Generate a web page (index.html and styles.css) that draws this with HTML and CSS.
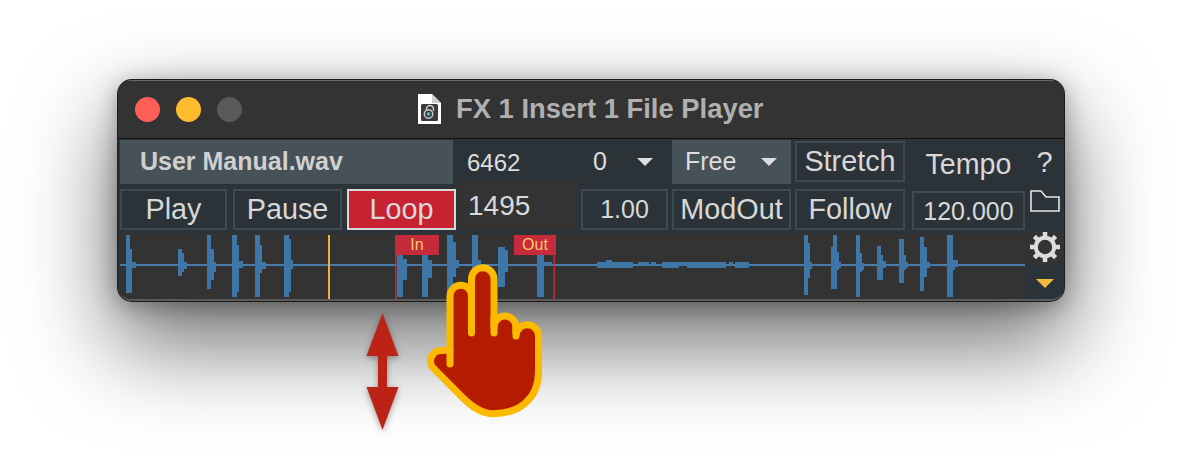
FILE: index.html
```html
<!DOCTYPE html>
<html lang="en">
<head>
    <meta charset="UTF-8">
    <title>FX 1 Insert 1 File Player</title>
    <link rel="stylesheet" href="styles.css">
</head>
<body>
    <div class="window">
        <div class="titlebar">
            <span class="light red"></span>
            <span class="light yellow"></span>
            <span class="light grey"></span>
            <div class="title">
                <svg class="doc-icon" viewBox="0 0 23 30">
                    <path d="M0 0H14L23 9V30H0Z" fill="#fff"/>
                    <path d="M14 0V9H23Z" fill="#ccc"/>
                    <rect x="3" y="10" width="17" height="17" rx="1.5" fill="#3a3a3a"/>
                    <circle cx="10.5" cy="20" r="4.2" fill="none" stroke="#ccc" stroke-width="1.4"/>
                    <path d="M8.5 16.5V15a3.5 3.5 0 0 1 7 0v2" fill="none" stroke="#ccc" stroke-width="1.4"/>
                    <circle cx="10.5" cy="20" r="1.8" fill="#45c4c8"/>
                </svg>
                <span>FX 1 Insert 1 File Player</span>
            </div>
        </div>
        <div class="panel">
            <div class="controls">
                <div class="row row-top">
                    <div class="filename">User Manual.wav</div>
                    <div class="start">6462</div>
                    <div class="select slice"><span>0</span><i class="caret"></i></div>
                    <div class="select mode"><span>Free</span><i class="caret"></i></div>
                    <div class="btn stretch">Stretch</div>
                    <div class="tempo-label">Tempo</div>
                </div>
                <div class="row row-bottom">
                    <div class="btn play">Play</div>
                    <div class="btn pause">Pause</div>
                    <div class="btn loop">Loop</div>
                    <div class="length">1495</div>
                    <div class="btn num rate">1.00</div>
                    <div class="btn modout">ModOut</div>
                    <div class="btn follow">Follow</div>
                    <div class="btn num tempo">120.000</div>
                </div>
                <div class="wave">
                    <svg viewBox="120 234 905 65" width="905" height="65">
                        <rect x="120" y="264" width="905" height="2" fill="#4a7cab"/>
                        <path fill="#3f76a8" d="
                            M126 235h4v58h-4z M130 249h2v23h-2z M132 262h4v6h-4z M130 272h2v21h-2z
                            M178 249h4v27h-4z M182 253h2v19h-2z M184 262h3v7h-3z
                            M207 235h4v54h-4z M211 249h3v31h-3z M214 262h2v10h-2z
                            M232 235h5v62h-5z M237 245h2v47h-2z M239 261h4v7h-4z
                            M255 235h5v62h-5z M260 245h2v28h-2z M262 262h4v7h-4z
                            M284 235h5v62h-5z M289 239h2v53h-2z M291 260h2v9h-2z
                            M397 255h6v42h-6z M403 259h4v21h-4z
                            M422 255h6v42h-6z M428 260h4v18h-4z
                            M447 235h6v62h-6z M453 242h3v35h-3z M456 260h3v8h-3z
                            M472 235h6v62h-6z M478 260h3v8h-3z
                            M498 247h7v40h-7z M505 250h3v22h-3z
                            M537 255h7v42h-7z M544 262h8v4h-8z
                            M597 262h36v6h-36z M606 260h6v2h-6z M638 262h11v3h-11z M651 262h5v3h-5z
                            M662 262h17v6h-17z M679 262h8v4h-8z M687 262h39v6h-39z M729 262h4v3h-4z M735 262h14v6h-14z
                            M804 235h4v60h-4z M808 243h2v35h-2z M810 262h2v7h-2z
                            M833 235h4v54h-4z M831 247h2v42h-2z M837 252h2v18h-2z M839 262h2v6h-2z
                            M856 235h4v62h-4z M860 253h2v19h-2z M862 263h2v7h-2z
                            M877 246h4v34h-4z M881 255h2v25h-2z M883 261h3v7h-3z
                            M899 239h5v44h-5z M904 255h2v15h-2z M906 262h2v6h-2z
                            M920 237h4v54h-4z M924 247h3v30h-3z M927 262h3v6h-3z
                            M947 235h6v62h-6z M953 260h2v10h-2z M955 260h3v7h-3z"/>
                        <rect x="328" y="235" width="2" height="64" fill="#efb23e"/>
                        <rect x="395" y="235" width="1.5" height="64" fill="#c62b3b"/>
                        <rect x="553.5" y="235" width="1.5" height="64" fill="#c62b3b"/>
                    </svg>
                    <span class="marker marker-in">In</span>
                    <span class="marker marker-out">Out</span>
                </div>
            </div>
            <div class="side">
                <div class="help">?</div>
                <svg class="folder" viewBox="0 0 30 22">
                    <path d="M1 21V1H11L16 7H29V21Z" fill="none" stroke="#e4e4e4" stroke-width="1.6"/>
                </svg>
                <div class="gear-cell">
                    <svg class="gear" viewBox="0 0 30 30">
                        <circle cx="15" cy="15" r="9.2" fill="none" stroke="#ddd" stroke-width="4"/>
                        <path stroke="#ddd" stroke-width="4.5" d="M15 0V6M15 24V30M0 15H6M24 15H30M4.4 4.4L8.6 8.6M21.4 21.4L25.6 25.6M4.4 25.6L8.6 21.4M21.4 8.6L25.6 4.4"/>
                    </svg>
                </div>
                <div class="more"><i class="more-caret"></i></div>
            </div>
        </div>
    </div>

    <svg class="arrow" viewBox="0 0 33 117">
        <path d="M16.5 0L32.5 43H21V74H32.5L16.5 117L.5 74H12V43H.5Z" fill="#bd2217"/>
    </svg>

    <svg class="hand" viewBox="425 262 120 158">
        <path d="M450 350V296A10.75 10.75 0 0 1 471.5 296V279A11.25 11.25 0 0 1 494 279V327A11 11 0 0 1 516 327V336A11.25 11.25 0 0 1 538.5 336V372C538.5 398 520 413.7 493 413.7C480 413.7 470 405 462 397L433.6 368.4A10.5 10.5 0 0 1 441 350.5Z" fill="#b51b00" stroke="#fbb900" stroke-width="7" stroke-linejoin="round"/>
        <path d="M471.5 296V333M494 318V333M516 327V333M450 350V364" fill="none" stroke="#fbb900" stroke-width="7" stroke-linecap="round"/>
    </svg>
</body>
</html>
```

FILE: styles.css
```css
html, body {
    margin: 0;
    height: 457px;
    overflow: hidden;
}
body {
    position: relative;
    padding: 80px 0 0 118px;
    box-sizing: border-box;
    background-color: #fff;
    font-family: "Liberation Sans", Arial, sans-serif;
    color: #d6d6d6;
}
.window {
    width: 946px;
    height: 221px;
    box-sizing: border-box;
    background: #333;
    border-radius: 14px;
    overflow: hidden;
    border-bottom: 2px solid #5a5a5a;
    box-shadow: 0 0 0 1px #1c1c1c, 0 4px 24px rgba(0,0,0,0.35), 0 40px 90px 5px rgba(0,0,0,0.55);
}

/* title bar */
.titlebar {
    display: flex;
    align-items: center;
    height: 58px;
    padding-left: 17px;
    background: #333;
    border-bottom: 1px solid #111;
    box-shadow: inset 0 1px 0 #6a6a6a;
    position: relative;
}
.light {
    width: 25px;
    height: 25px;
    border-radius: 50%;
    margin-right: 16px;
}
.red { background: #ff5f57; }
.yellow { background: #febc2e; }
.grey { background: #5a5a5a; }
.title {
    display: flex;
    align-items: center;
    gap: 15px;
    margin-left: 160px;
    font-size: 27.4px;
    font-weight: bold;
    color: #b0b0b0;
}
.doc-icon {
    width: 23px;
    height: 30px;
}

/* controls */
.panel {
    display: flex;
    background: #2b3338;
    height: 162px;
}
.controls {
    width: 907px;
    padding: 1px 0 0 2px;
    box-sizing: border-box;
}
.row {
    display: flex;
}
.row-top {
    height: 44px;
}
.row-bottom {
    height: 41px;
    margin-top: 5px;
}
.filename {
    width: 313px;
    padding-left: 20px;
    line-height: 42px;
    font-size: 25px;
    font-weight: bold;
    color: #d0d0d0;
    background: #465158;
}
.start {
    width: 111px;
    padding-left: 14px;
    line-height: 46px;
    font-size: 24px;
    color: #ddd;
}
.select {
    display: flex;
    align-items: center;
    font-size: 25px;
    color: #ddd;
}
.select span {
    line-height: 40px;
    margin-top: -2px;
}
.slice {
    width: 75px;
    padding-left: 15px;
    margin-right: 4px;
    gap: 30px;
}
.mode {
    width: 106px;
    padding-left: 13px;
    gap: 25px;
    background: #465158;
}
.caret {
    width: 0;
    height: 0;
    margin-top: -1px;
    border-left: 8px solid transparent;
    border-right: 8px solid transparent;
    border-top: 8px solid #ddd;
}
.btn {
    box-sizing: border-box;
    border: 2px solid #3d4a52;
    font-size: 28.8px;
    line-height: 37px;
    text-align: center;
    color: #d8d8d8;
    white-space: nowrap;
}
.stretch {
    width: 110px;
    margin: 1px 0 2px 4px;
}
.tempo-label {
    width: 113px;
    margin-left: 7px;
    font-size: 28.6px;
    line-height: 48px;
    text-align: center;
    color: #d8d8d8;
}
.play { width: 107px; }
.pause { width: 109px; margin-left: 6px; }
.loop {
    width: 109px;
    margin-left: 5px;
    background: #c62231;
    border-color: #d8d8d8;
}
.length {
    width: 110px;
    margin: -9px 0 0 2px;
    padding-left: 10px;
    background: #333;
    font-size: 28px;
    line-height: 52px;
    color: #d8d8d8;
}
.num {
    font-size: 25px;
}
.rate { width: 87px; margin-left: 3px; }
.modout { width: 119px; margin-left: 4px; }
.follow { width: 110px; margin-left: 4px; }
.tempo { width: 113px; margin: 2px 0 0 7px; line-height: 36px; }

/* waveform */
.wave {
    position: relative;
    width: 905px;
    height: 65px;
    margin-top: 4px;
    background: #333;
}
.wave svg {
    display: block;
}
.marker {
    position: absolute;
    top: 1px;
    height: 20px;
    background: #c62b3b;
    color: #f7c96b;
    font-size: 16px;
    line-height: 20px;
    text-align: center;
}
.marker-in { left: 275px; width: 44px; }
.marker-out { left: 394px; width: 42px; }

/* right column */
.side {
    flex: 1;
    display: flex;
    flex-direction: column;
    align-items: center;
}
.help {
    height: 51px;
    font-size: 29px;
    line-height: 46px;
    color: #d8d8d8;
}
.folder {
    width: 30px;
    height: 22px;
    margin-bottom: 20px;
}
.gear-cell {
    width: 100%;
    height: 34px;
    background: #333;
    border-radius: 0 0 16px 16px;
    text-align: center;
}
.gear {
    display: block;
    width: 30px;
    height: 30px;
    margin: 0 auto;
}
.more {
    padding-top: 13px;
}
.more-caret {
    display: block;
    width: 0;
    height: 0;
    border-left: 9px solid transparent;
    border-right: 9px solid transparent;
    border-top: 9px solid #f5b942;
}

/* annotations lying over the window */
.arrow {
    position: absolute;
    left: 366px;
    top: 313px;
    width: 33px;
    height: 117px;
    filter: drop-shadow(0 2px 3px rgba(0,0,0,0.35));
}
.hand {
    position: absolute;
    left: 425px;
    top: 262px;
    width: 120px;
    height: 158px;
}
```
